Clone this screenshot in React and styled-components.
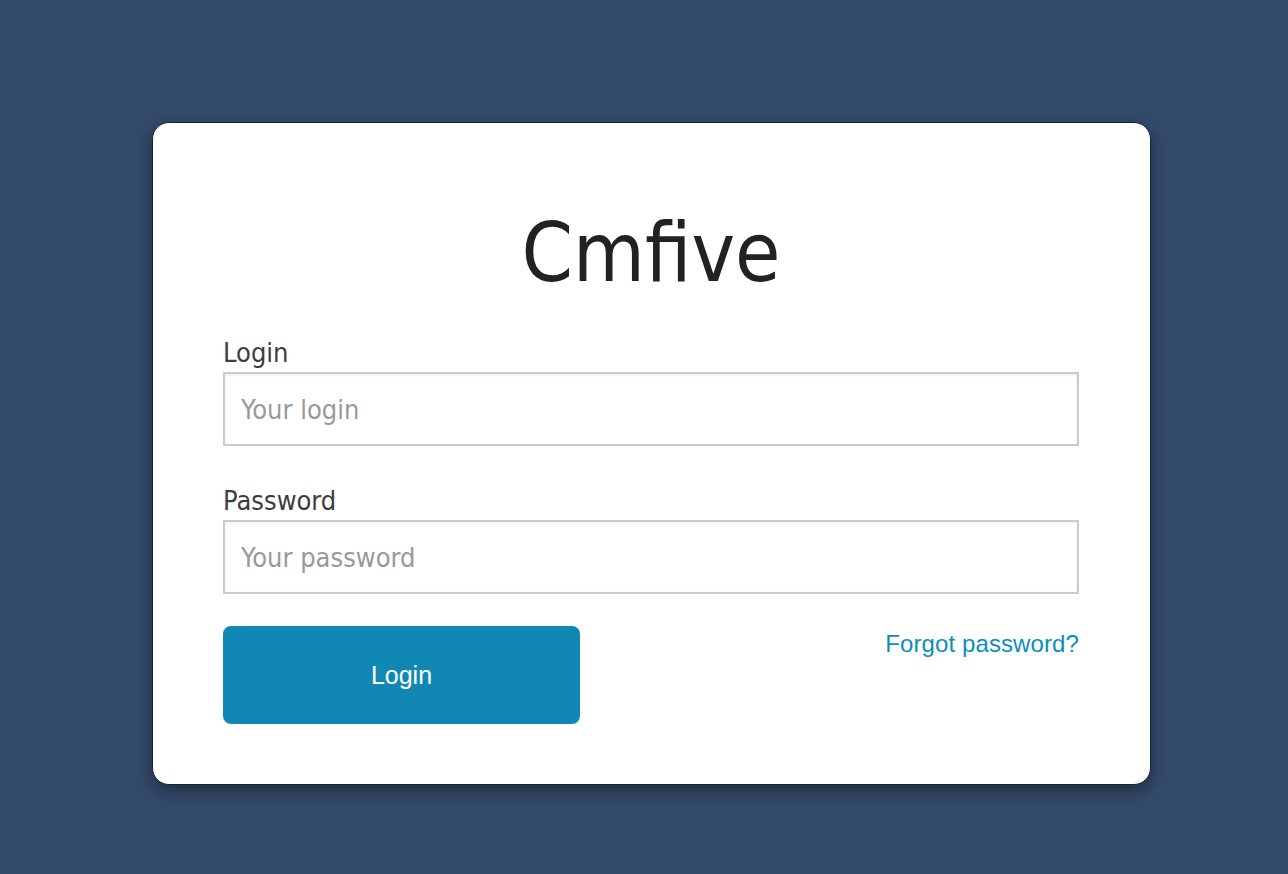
import React from 'react';
import styled, { createGlobalStyle } from 'styled-components';

const GlobalStyle = createGlobalStyle`
  html, body {
    margin: 0;
    padding: 0;
    background: #344a6a;
  }
  * {
    box-sizing: border-box;
  }
`;

const Page = styled.div`
  min-height: 874px;
  padding: 122px 0 0 152px;
  background: #344a6a;
`;

const Card = styled.form`
  width: 999px;
  background: #fff;
  border: 1px solid #0e213d;
  border-radius: 17px;
  box-shadow: 0 6px 16px rgba(0, 0, 0, 0.4);
  padding: 89px 71px 60px 70px;
`;

const Title = styled.h1`
  margin: 0 0 43px;
  font-family: 'DejaVu Sans Condensed', 'DejaVu Sans', sans-serif;
  font-weight: normal;
  font-size: 82px;
  line-height: 1;
  color: #222;
  text-align: center;
`;

const Field = styled.div`
  display: flex;
  flex-direction: column;
  & + & {
    margin-top: 39px;
  }
`;

const Label = styled.label`
  font-family: 'DejaVu Sans Condensed', 'DejaVu Sans', sans-serif;
  font-size: 27px;
  line-height: 32px;
  color: #3d3d3d;
  margin-bottom: 3px;
`;

const Input = styled.input`
  width: 100%;
  height: 74px;
  border: 2px solid #cbcbcb;
  box-shadow: inset 0 1px 3px rgba(0, 0, 0, 0.08);
  padding: 0 16px;
  font-family: 'DejaVu Sans Condensed', 'DejaVu Sans', sans-serif;
  font-size: 27px;
  color: #333;
  outline: none;
  background: #fff;
  &::placeholder {
    color: #999;
  }
`;

const Actions = styled.div`
  display: flex;
  justify-content: space-between;
  align-items: flex-start;
  margin-top: 32px;
`;

const Button = styled.button`
  width: 357px;
  height: 98px;
  border: none;
  border-radius: 8px;
  background: #1188b4;
  color: #fff;
  font-family: 'Liberation Sans', Arial, sans-serif;
  font-size: 25px;
  cursor: pointer;
`;

const Forgot = styled.a`
  margin-top: 4px;
  font-family: 'Liberation Sans', Arial, sans-serif;
  font-size: 24px;
  letter-spacing: 0.1px;
  color: #0a8fbd;
  text-decoration: none;
`;

export default function App() {
  return (
    <>
      <GlobalStyle />
      <Page>
        <Card onSubmit={e => e.preventDefault()}>
          <Title>Cmfive</Title>
          <Field>
            <Label htmlFor="login">Login</Label>
            <Input id="login" type="text" placeholder="Your login" />
          </Field>
          <Field>
            <Label htmlFor="password">Password</Label>
            <Input id="password" type="password" placeholder="Your password" />
          </Field>
          <Actions>
            <Button type="submit">Login</Button>
            <Forgot href="#">Forgot password?</Forgot>
          </Actions>
        </Card>
      </Page>
    </>
  );
}
